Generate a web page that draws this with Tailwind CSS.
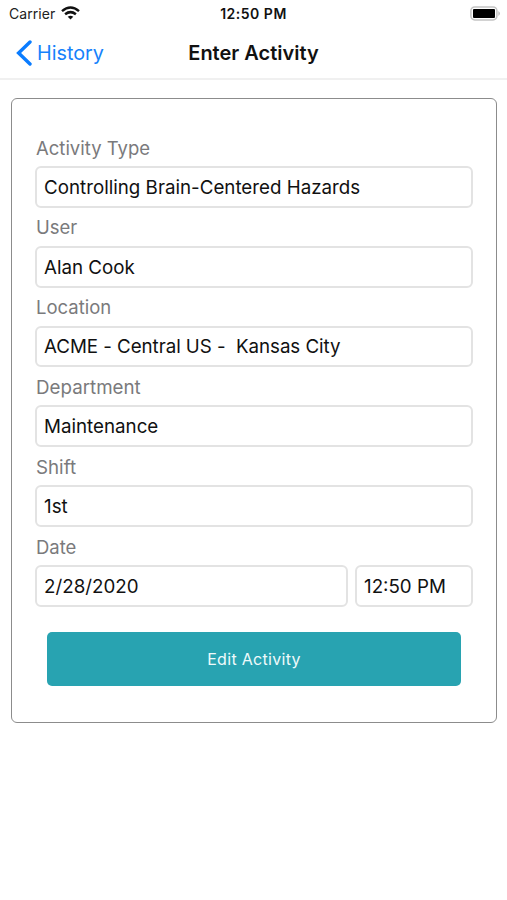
<!DOCTYPE html>
<html lang="en">
<head>
<meta charset="utf-8">
<title>Enter Activity</title>
<script src="https://cdn.jsdelivr.net/npm/@tailwindcss/browser@4"></script>
</head>
<body class="bg-white font-['Inter','Liberation_Sans',sans-serif] text-[#111] w-[507px] h-[900px] overflow-hidden">
<header class="h-[80px] border-b-2 border-[#f0f0f0]">
  <div class="grid grid-cols-3 items-center h-[27px] text-[14px]">
    <div class="flex items-center gap-[6px] pl-[9px] text-[#222]">
      <span class="tracking-[0.05px]">Carrier</span>
      <svg class="w-[19px] h-[14px] -mt-px" viewBox="0 0 19 14" fill="none" stroke="#111" stroke-width="2.5"><path d="M1 5.1Q9.5-2 18 5.1M4.1 8.3Q9.5 4 14.9 8.3"/><path d="M9.5 13.6 6.7 10.8Q9.5 8.7 12.3 10.8Z" fill="#111" stroke="none"/></svg>
    </div>
    <div class="text-center font-semibold text-[14px] tracking-[0.5px]">12:50 PM</div>
    <div class="flex justify-end pr-[6px]">
      <svg class="w-[31px] h-[15px]" viewBox="0 0 31 15"><rect x=".9" y=".9" width="26" height="13" rx="3.8" fill="#fff" stroke="#c4c4c4" stroke-width="1.5"/><rect x="3" y="3" width="22" height="9" rx="1" fill="#000"/><path d="M28.5 5Q31 7.5 28.5 10Z" fill="#aaa"/></svg>
    </div>
  </div>
  <div class="grid grid-cols-3 items-center h-[51px] text-[19.8px]">
    <div class="flex items-center gap-[5px] pl-[16px] text-[#1682fb]">
      <svg class="w-[16px] h-[26px]" viewBox="0 0 16 26" fill="none" stroke="#0a7cff" stroke-width="3.4" stroke-linecap="round"><path d="M14 2 2.6 13l11.4 11"/></svg>
      <span class="pt-[2px]">History</span>
    </div>
    <h1 class="text-center font-semibold whitespace-nowrap text-[20px] pt-px">Enter Activity</h1>
  </div>
</header>
<main class="ml-[11px] mt-[18px] w-[486px] h-[625px] border border-[#8c8c8c] rounded-[6px] pl-[23px] pr-[23px] pt-[29px] text-[18.75px]">
  <div class="h-[79.8px] flex flex-col"><div class="h-[38px] pt-[3px] pl-px flex items-center text-[#7a7a7c] text-[18.5px]">Activity Type</div><div class="h-[42px] border-2 border-[#e3e3e3] rounded-[6px] px-[7px] pt-[2px] flex items-center">Controlling Brain-Centered Hazards</div></div>
  <div class="h-[79.8px] flex flex-col"><div class="h-[38px] pt-[3px] pl-px flex items-center text-[#7a7a7c] text-[18.5px]">User</div><div class="h-[42px] border-2 border-[#e3e3e3] rounded-[6px] px-[7px] pt-[2px] flex items-center">Alan Cook</div></div>
  <div class="h-[79.8px] flex flex-col"><div class="h-[38px] pt-[3px] pl-px flex items-center text-[#7a7a7c] text-[18.5px]">Location</div><div class="h-[42px] border-2 border-[#e3e3e3] rounded-[6px] px-[7px] pt-[2px] flex items-center whitespace-pre tracking-[-0.05px]">ACME - Central US -  Kansas City</div></div>
  <div class="h-[79.8px] flex flex-col"><div class="h-[38px] pt-[3px] pl-px flex items-center text-[#7a7a7c] text-[18.75px]">Department</div><div class="h-[42px] border-2 border-[#e3e3e3] rounded-[6px] px-[7px] pt-[2px] flex items-center">Maintenance</div></div>
  <div class="h-[79.8px] flex flex-col"><div class="h-[38px] pt-[3px] pl-px flex items-center text-[#7a7a7c] text-[18.75px]">Shift</div><div class="h-[42px] border-2 border-[#e3e3e3] rounded-[6px] px-[7px] pt-[2px] flex items-center">1st</div></div>
  <div class="h-[79.8px] flex flex-col"><div class="h-[38px] pt-[3px] pl-px flex items-center text-[#7a7a7c] text-[18.5px]">Date</div>
    <div class="flex gap-[7px]">
      <div class="h-[42px] flex-1 border-2 border-[#e3e3e3] rounded-[6px] px-[7px] pt-[2px] flex items-center">2/28/2020</div>
      <div class="h-[42px] w-[118px] border-2 border-[#e3e3e3] rounded-[6px] px-[7px] pt-[2px] flex items-center">12:50 PM</div>
    </div>
  </div>
  <button class="block mt-[25px] ml-[12px] w-[414px] h-[54px] rounded-[5px] bg-[#28a3b1] text-[#eefafb] text-[16px] tracking-[0.3px] pt-px">Edit Activity</button>
</main>
</body>
</html>
